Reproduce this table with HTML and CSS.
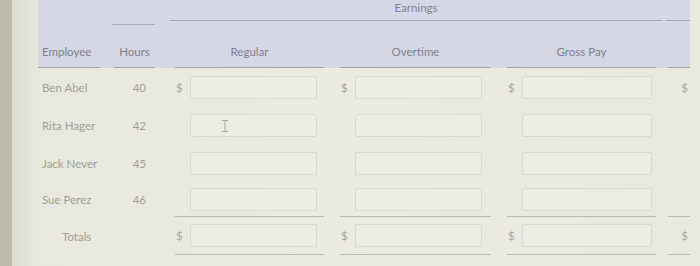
FILE: index.html
```html
<!DOCTYPE html>
<html>
<head>
<meta charset="utf-8">
<link rel="stylesheet" href="styles.css">
</head>
<body>
<div class="frame">
  <div class="sheet">
    <div class="head">
      <div class="cell c-emp"></div>
      <div class="cell c-hours"><span class="short-line"></span></div>
      <div class="cell earnings">Earnings</div>
      <div class="cell c-last top-line"></div>

      <div class="cell colhead c-emp left">Employee</div>
      <div class="cell colhead c-hours">Hours</div>
      <div class="cell colhead">Regular</div>
      <div class="cell colhead">Overtime</div>
      <div class="cell colhead">Gross Pay</div>
      <div class="cell colhead c-last"></div>
    </div>

    <div class="rows">
      <div class="name">Ben Abel</div>
      <div class="hrs">40</div>
      <div class="amt"><span class="dollar">$</span><span class="box"></span></div>
      <div class="amt"><span class="dollar">$</span><span class="box"></span></div>
      <div class="amt"><span class="dollar">$</span><span class="box wide"></span></div>
      <div class="last"><span class="dollar">$</span></div>

      <div class="name">Rita Hager</div>
      <div class="hrs">42</div>
      <div class="amt"><span class="dollar"></span><span class="box"><svg class="ibeam" width="8" height="12" viewBox="0 0 8 12"><path d="M1 0.5h6M1 11.5h6M4 0.5v11" stroke="#a8a8a0" stroke-width="1" fill="none"/></svg></span></div>
      <div class="amt"><span class="dollar"></span><span class="box"></span></div>
      <div class="amt"><span class="dollar"></span><span class="box wide"></span></div>
      <div class="last"></div>

      <div class="name">Jack Never</div>
      <div class="hrs">45</div>
      <div class="amt"><span class="dollar"></span><span class="box"></span></div>
      <div class="amt"><span class="dollar"></span><span class="box"></span></div>
      <div class="amt"><span class="dollar"></span><span class="box wide"></span></div>
      <div class="last"></div>

      <div class="name">Sue Perez</div>
      <div class="hrs">46</div>
      <div class="amt ruled"><span class="dollar"></span><span class="box"></span></div>
      <div class="amt ruled"><span class="dollar"></span><span class="box"></span></div>
      <div class="amt ruled"><span class="dollar"></span><span class="box wide"></span></div>
      <div class="last ruled"></div>

      <div class="name totals">Totals</div>
      <div class="hrs"></div>
      <div class="amt ruled"><span class="dollar">$</span><span class="box"></span></div>
      <div class="amt ruled"><span class="dollar">$</span><span class="box"></span></div>
      <div class="amt ruled"><span class="dollar">$</span><span class="box wide"></span></div>
      <div class="last ruled"><span class="dollar">$</span></div>
    </div>
  </div>
</div>
</body>
</html>
```

FILE: styles.css
```css
html, body {
  margin: 0;
  padding: 0;
  height: 100%;
}
body {
  background: #e9e9e0;
  font-family: Lato, "Noto Sans", sans-serif;
  font-size: 11.5px;
  overflow: hidden;
}
.frame {
  height: 266px;
  border-left: 12px solid #bdbbae;
  background: linear-gradient(90deg, #dcdbcf 0px, #e8e8de 26px, #ebebe2 300px, #e9e9e0 700px);
  padding-left: 26px;
}
.sheet {
  width: 652px;
}
.head, .rows {
  display: grid;
  grid-template-columns: 70px 57px 165px 167px 165px 28px;
}
.head {
  background: #d6d7e5;
  grid-template-rows: 21px 47px;
}
.cell {
  color: #7f7f8a;
  position: relative;
}
.earnings {
  grid-column: 3 / 6;
  text-align: center;
  border-bottom: 1px solid #a9a9b6;
  padding-top: 1px;
  margin-left: 5px;
}
.top-line {
  border-bottom: 1px solid #a9a9b6;
  margin-left: 4px;
}
.short-line {
  position: absolute;
  left: 4px;
  right: 10px;
  bottom: -4px;
  border-bottom: 1px solid #a9a9b6;
}
.colhead {
  display: flex;
  align-items: flex-end;
  justify-content: center;
  padding-bottom: 9px;
  border-bottom: 1px solid #a3a3ad;
  margin: 0 6px 0 10px;
}
.colhead.left {
  justify-content: flex-start;
  margin: 0 8px 0 0;
  padding-left: 4px;
}
.colhead.c-hours {
  margin: 0 10px 0 6px;
}
.colhead.c-last {
  margin: 0 0 0 6px;
}
.rows {
  grid-template-rows: 38px 38px 38px 35px 38px;
  color: #9e9e96;
}
.rows > div {
  display: flex;
  align-items: center;
}
.name {
  padding-left: 4px;
}
.name.totals {
  padding-left: 24px;
}
.hrs {
  justify-content: flex-end;
  padding-right: 19px;
}
.amt {
  margin: 0 6px 0 10px;
}
.amt.ruled, .last.ruled {
  border-bottom: 1px solid #b9b9b2;
}
.dollar {
  width: 13px;
  flex: none;
  padding-left: 1px;
  color: #a5a59d;
}
.box {
  position: relative;
  width: 125px;
  height: 21px;
  margin-left: 1px;
  border: 1px solid #d9d9d1;
  border-radius: 2px;
  background: #edede6;
}
.box.wide {
  width: 128px;
}
.last {
  margin-left: 6px;
  justify-content: flex-end;
}
.last .dollar {
  width: auto;
  padding: 0 2px 0 0;
}
.ibeam {
  position: absolute;
  left: 30px;
  top: 5px;
}
```
